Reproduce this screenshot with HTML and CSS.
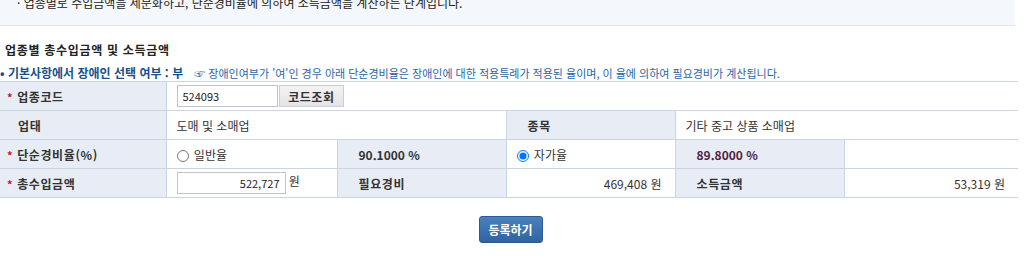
FILE: index.html
```html
<!DOCTYPE html>
<html lang="ko">
<head>
	<meta charset="UTF-8">
	<title>업종별 총수입금액 및 소득금액</title>
	<link rel="stylesheet" href="styles.css">
</head>
<body>

	<!-- 단계 안내 -->
	<div class="guide-box">
		<p>· 업종별로 수입금액을 세분화하고, 단순경비율에 의하여 소득금액을 계산하는 단계입니다.</p>
	</div>

	<h3 class="sub-title">업종별 총수입금액 및 소득금액</h3>

	<p class="notice">
		<strong>• 기본사항에서 장애인 선택 여부 : 부</strong>
		<span class="hand">☞</span> 장애인여부가 '여'인 경우 아래 단순경비율은 장애인에 대한 적용특례가 적용된 율이며, 이 율에 의하여 필요경비가 계산됩니다.
	</p>

	<table class="form-table">
		<colgroup>
			<col style="width:166px">
			<col style="width:171px">
			<col style="width:169px">
			<col style="width:169px">
			<col style="width:169px">
			<col>
		</colgroup>
		<tr>
			<th class="first"><span class="req">*</span>업종코드</th>
			<td colspan="5">
				<input type="text" class="code-input" value="524093">
				<button type="button" class="btn-gray">코드조회</button>
			</td>
		</tr>
		<tr>
			<th class="first plain">업태</th>
			<td colspan="2">도매 및 소매업</td>
			<th>종목</th>
			<td colspan="2">기타 중고 상품 소매업</td>
		</tr>
		<tr>
			<th class="first"><span class="req">*</span>단순경비율(%)</th>
			<td><label class="radio"><input type="radio" name="rate"> 일반율</label></td>
			<th class="num">90.1000 %</th>
			<td><label class="radio"><input type="radio" name="rate" checked> 자가율</label></td>
			<th class="num own">89.8000 %</th>
			<td></td>
		</tr>
		<tr>
			<th class="first"><span class="req">*</span>총수입금액</th>
			<td><input type="text" class="amount-input" value="522,727"> 원</td>
			<th>필요경비</th>
			<td class="right">469,408 원</td>
			<th>소득금액</th>
			<td class="right">53,319 원</td>
		</tr>
	</table>

	<div class="btn-area">
		<button type="button" class="btn-blue">등록하기</button>
	</div>

</body>
</html>
```

FILE: styles.css
```css
body {
	margin: 0;
	font-family: "Noto Sans CJK KR", "Noto Sans", sans-serif;
	font-size: 12px;
	color: #333;
	width: 1018px;
}
.guide-box {
	margin-top: -14px;
	width: 1015px;
	padding: 8px 0 13px 17px;
	box-sizing: border-box;
	background: #f4f7fb;
	border-bottom: 1px solid #e1e6ee;
}
.guide-box p {
	margin: 0;
	line-height: 18px;
	color: #222;
}
.sub-title {
	margin: 15px 0 0 5px;
	font-size: 12px;
	line-height: 18px;
	letter-spacing: 0.7px;
	color: #222;
}
.notice {
	margin: 6px 0 0 0;
	line-height: 16px;
	color: #2a66a8;
	font-size: 11px;
}
.notice strong {
	color: #1b4f8c;
	font-size: 12px;
}
.hand {
	margin-left: 8px;
	color: #2a66a8;
}
.form-table {
	width: 1018px;
	margin-top: 0;
	border-collapse: collapse;
	table-layout: fixed;
	border-top: 1px solid #c9d5e3;
}
.form-table th,
.form-table td {
	height: 28px;
	padding: 0;
	border-bottom: 1px solid #c9d5e3;
	border-left: 1px solid #c9d5e3;
	text-align: left;
	white-space: nowrap;
}
.form-table th {
	background: #e8edf5;
	font-weight: bold;
	letter-spacing: 0.6px;
	color: #333;
	padding-left: 21px;
}
.form-table th.first {
	border-left: none;
	padding-left: 7px;
}
.form-table th.plain {
	padding-left: 18px;
}
.form-table th.num {
	letter-spacing: 0;
}
.form-table td {
	background: #fff;
	padding-left: 10px;
}
.form-table td.right {
	text-align: right;
	padding-right: 13px;
}
.req {
	color: #c8141e;
	margin-right: 4px;
	font-size: 11px;
}
.num {
	color: #2b2f4a;
}
.num.own {
	color: #52223e;
}
.code-input,
.amount-input {
	height: 22px;
	box-sizing: border-box;
	border: 1px solid #c4c4c4;
	font-family: inherit;
	font-size: 11px;
	padding: 0 5px;
	vertical-align: middle;
	color: #222;
}
.code-input {
	width: 101px;
}
.amount-input {
	width: 109px;
	text-align: right;
}
.btn-gray {
	height: 22px;
	width: 65px;
	margin-left: -2px;
	border: 1px solid #cdcdcd;
	background: linear-gradient(#f3f3f3, #e4e4e4);
	font-family: inherit;
	font-size: 12px;
	font-weight: bold;
	letter-spacing: 0.5px;
	color: #333;
	vertical-align: middle;
	padding: 0;
}
.radio input {
	margin: 0 2px 0 0;
	vertical-align: -2px;
	width: 12px;
	height: 12px;
}
.btn-area {
	text-align: center;
	padding-top: 18px;
}
.btn-blue {
	width: 64px;
	height: 27px;
	margin-left: 3px;
	border: 1px solid #2c5a90;
	border-radius: 3px;
	background: linear-gradient(#4a80bd, #2f649f);
	color: #fff;
	font-family: inherit;
	font-size: 12px;
	font-weight: bold;
	padding: 0;
}
```
